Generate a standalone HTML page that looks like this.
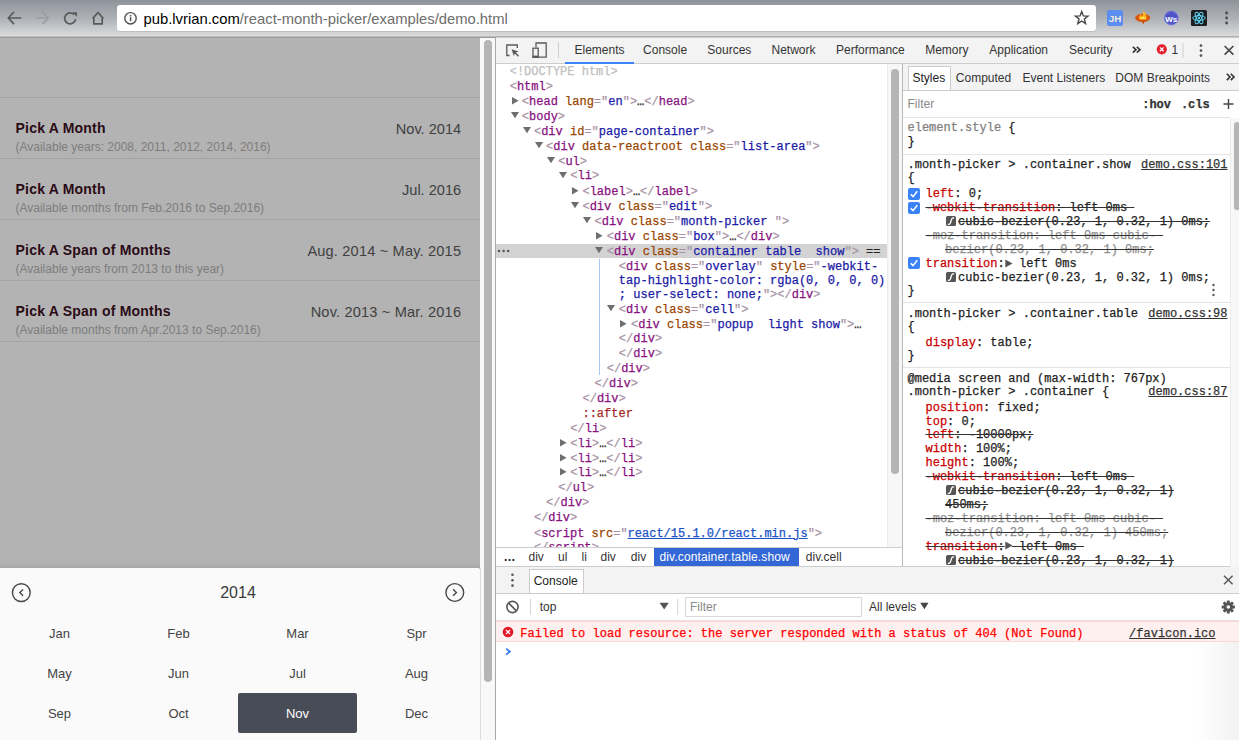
<!DOCTYPE html><html><head><meta charset="utf-8"><style>
html,body{margin:0;padding:0;width:1239px;height:740px;overflow:hidden;background:#fff;position:relative}
div,svg{position:absolute}
.m{-webkit-text-stroke:0.25px}
span div, span svg{position:absolute}
</style></head><body>
<div style="left:0px;top:0px;width:1239px;height:36px;background:linear-gradient(#8e939b,#b1b4b9 55%,#dadbdd);"></div>
<div style="left:0px;top:36px;width:496px;height:1px;background:#bdbdbd;"></div>
<div style="left:0px;top:37px;width:496px;height:1px;background:#9c9c9c;"></div>
<div style="left:496px;top:36px;width:743px;height:1px;background:#b0b0b0;"></div>
<div style="left:496px;top:37px;width:743px;height:1px;background:#cbcbcb;"></div>
<svg style="left:0;top:0" width="115" height="36" viewBox="0 0 115 36">
<g fill="none" stroke="#5a5a5a" stroke-width="1.6" stroke-linecap="square">
<path d="M8.5 18 H20.5 M13.5 12.5 L8.3 18 L13.5 23.5"/>
</g>
<g fill="none" stroke="#9a9da2" stroke-width="1.6" stroke-linecap="square">
<path d="M36.5 18 H48 M43 12.5 L48.2 18 L43 23.5"/>
</g>
<g fill="none" stroke="#5a5a5a" stroke-width="1.7">
<path d="M75.6 19.2 A5.5 5.5 0 1 1 73.9 14.3"/>
</g>
<path d="M72.3 12.2 L77 12.2 L77 16.9 Z" fill="#5a5a5a"/>
<g fill="none" stroke="#5a5a5a" stroke-width="1.7" stroke-linejoin="miter">
<path d="M92.5 18.5 L98 12.6 L103.5 18.5 M93.8 17.2 V23.8 H102.2 V17.2"/>
</g>
</svg>
<div style="left:117px;top:5px;width:979px;height:26px;background:#fff;border-radius:3px;box-shadow:0 1px 0 rgba(0,0,0,.08);"></div>
<svg style="left:120;top:8px;left:120px" width="22" height="22" viewBox="0 0 22 22">
<circle cx="10.5" cy="10.3" r="5.7" fill="none" stroke="#505050" stroke-width="1.4"/>
<rect x="9.8" y="9.2" width="1.5" height="4" fill="#505050"/><rect x="9.8" y="7" width="1.5" height="1.5" fill="#505050"/>
</svg>
<div style="left:143.5px;top:11.57px;font:normal 14.8px/14.8px 'Liberation Sans', sans-serif;color:#000;white-space:pre;"><span style="color:#000">pub.lvrian.com</span><span style="color:#6d6d6d">/react-month-picker/examples/demo.html</span></div>
<svg style="left:1072px;top:9px" width="20" height="20" viewBox="0 0 20 20">
<path d="M9.70 2.60 L11.35 6.93 L15.98 7.16 L12.36 10.07 L13.58 14.54 L9.70 12.00 L5.82 14.54 L7.04 10.07 L3.42 7.16 L8.05 6.93 Z" fill="none" stroke="#454545" stroke-width="1.4" stroke-linejoin="miter"/>
</svg>
<svg style="left:1100px;top:4px" width="139" height="28" viewBox="1100 4 139 28">
<rect x="1107" y="10" width="16" height="16" rx="2" fill="#5b8ef0"/>
<text x="1115" y="22.3" font-family="Liberation Sans" font-weight="bold" font-size="9.8" fill="#f2ecd6" text-anchor="middle">JH</text>
<ellipse cx="1142.7" cy="17.8" rx="7.6" ry="4" fill="#d9560f"/>
<path d="M1141.6 21 L1143.4 24.5 L1144.8 20.8 Z" fill="#c74a0a"/>
<path d="M1139.2 19.2 C1138.6 16 1140.5 15.5 1140.6 14.2 C1142 15.5 1141.8 16.5 1142.8 16.3 C1142.6 14 1143.5 12 1143.2 10.8 C1145.5 12.5 1147 15.5 1146.5 19.2 Z" fill="#ffb020"/>
<path d="M1140 19.3 L1140.6 16.8 L1142.2 18 L1143.2 15.6 L1144.4 18 L1145.8 16.8 L1146 19.3 Z" fill="#ffe14a"/>
<circle cx="1171.3" cy="18" r="7.2" fill="#6064d0" stroke="#8a8de0" stroke-width="0.8" stroke-dasharray="1 0.8"/>
<circle cx="1171.3" cy="18" r="5.8" fill="#4d52c4"/>
<text x="1171.3" y="21.5" font-family="Liberation Sans" font-weight="bold" font-size="8" fill="#fff" text-anchor="middle">Ws</text>
<rect x="1191" y="10" width="16" height="16" rx="1.5" fill="#1d1d1d"/>
<g fill="none" stroke="#5fd4f5" stroke-width="1"><ellipse cx="1199" cy="18" rx="6.3" ry="2.4"/><ellipse cx="1199" cy="18" rx="6.3" ry="2.4" transform="rotate(60 1199 18)"/><ellipse cx="1199" cy="18" rx="6.3" ry="2.4" transform="rotate(-60 1199 18)"/></g>
<circle cx="1199" cy="18" r="1.2" fill="#5fd4f5"/>
<circle cx="1226.6" cy="13" r="1.4" fill="#4a4a4a"/><circle cx="1226.6" cy="18" r="1.4" fill="#4a4a4a"/><circle cx="1226.6" cy="23" r="1.4" fill="#4a4a4a"/>
</svg>
<div style="left:0px;top:38px;width:480px;height:702px;background:#b3b3b3;"></div>
<div style="left:0px;top:97px;width:480px;height:1px;background:#a3a3a3;"></div>
<div style="left:0px;top:158px;width:480px;height:1px;background:#a3a3a3;"></div>
<div style="left:0px;top:219px;width:480px;height:1px;background:#a3a3a3;"></div>
<div style="left:0px;top:280px;width:480px;height:1px;background:#a3a3a3;"></div>
<div style="left:0px;top:341px;width:480px;height:1px;background:#a3a3a3;"></div>
<div style="left:15.5px;top:120.95px;font:bold 14px/14px 'Liberation Sans', sans-serif;color:#2b0b16;white-space:pre;letter-spacing:0.22px;">Pick A Month</div>
<div style="left:15.5px;top:140.54px;font:normal 12px/12px 'Liberation Sans', sans-serif;color:#7d7d7d;white-space:pre;">(Available years: 2008, 2011, 2012, 2014, 2016)</div>
<div style="right:777.8px;text-align:right;top:121.84px;font:normal 14.6px/14.6px 'Liberation Sans', sans-serif;color:#404040;white-space:pre;">Nov. 2014</div>
<div style="left:15.5px;top:181.95px;font:bold 14px/14px 'Liberation Sans', sans-serif;color:#2b0b16;white-space:pre;letter-spacing:0.22px;">Pick A Month</div>
<div style="left:15.5px;top:201.54px;font:normal 12px/12px 'Liberation Sans', sans-serif;color:#7d7d7d;white-space:pre;">(Available months from Feb.2016 to Sep.2016)</div>
<div style="right:777.8px;text-align:right;top:182.84px;font:normal 14.6px/14.6px 'Liberation Sans', sans-serif;color:#404040;white-space:pre;">Jul. 2016</div>
<div style="left:15.5px;top:242.95px;font:bold 14px/14px 'Liberation Sans', sans-serif;color:#2b0b16;white-space:pre;letter-spacing:0.22px;">Pick A Span of Months</div>
<div style="left:15.5px;top:262.54px;font:normal 12px/12px 'Liberation Sans', sans-serif;color:#7d7d7d;white-space:pre;">(Available years from 2013 to this year)</div>
<div style="right:777.8px;text-align:right;top:243.84px;font:normal 14.6px/14.6px 'Liberation Sans', sans-serif;color:#404040;white-space:pre;letter-spacing:0.17px;">Aug. 2014 ~ May. 2015</div>
<div style="left:15.5px;top:303.95px;font:bold 14px/14px 'Liberation Sans', sans-serif;color:#2b0b16;white-space:pre;letter-spacing:0.22px;">Pick A Span of Months</div>
<div style="left:15.5px;top:323.54px;font:normal 12px/12px 'Liberation Sans', sans-serif;color:#7d7d7d;white-space:pre;">(Available months from Apr.2013 to Sep.2016)</div>
<div style="right:777.8px;text-align:right;top:304.84px;font:normal 14.6px/14.6px 'Liberation Sans', sans-serif;color:#404040;white-space:pre;letter-spacing:0.17px;">Nov. 2013 ~ Mar. 2016</div>
<div style="left:0px;top:563px;width:480px;height:5px;background:linear-gradient(rgba(0,0,0,0),rgba(0,0,0,.07));"></div>
<div style="left:0px;top:568px;width:480px;height:172px;background:#fafafa;border-radius:0 2px 0 0;"></div>
<svg style="left:0;top:568px" width="480" height="50" viewBox="0 568 480 50">
<g fill="none" stroke="#474747" stroke-width="1.4">
<circle cx="21.3" cy="592.6" r="8.9"/><path d="M23.1 589.4 L19.8 592.6 L23.1 595.8"/>
<circle cx="454.8" cy="592.5" r="8.9"/><path d="M453.1 589.3 L456.4 592.5 L453.1 595.7"/>
</g></svg>
<div style="left:38px;width:400px;text-align:center;top:585.15px;font:normal 16px/16px 'Liberation Sans', sans-serif;color:#3a3a3a;white-space:pre;">2014</div>
<div style="left:238px;top:693px;width:119px;height:40px;background:#484c57;border-radius:2px;"></div>
<div style="left:-140.5px;width:400px;text-align:center;top:626.59px;font:normal 13px/13px 'Liberation Sans', sans-serif;color:#444;white-space:pre;">Jan</div>
<div style="left:-21.5px;width:400px;text-align:center;top:626.59px;font:normal 13px/13px 'Liberation Sans', sans-serif;color:#444;white-space:pre;">Feb</div>
<div style="left:97.5px;width:400px;text-align:center;top:626.59px;font:normal 13px/13px 'Liberation Sans', sans-serif;color:#444;white-space:pre;">Mar</div>
<div style="left:216.5px;width:400px;text-align:center;top:626.59px;font:normal 13px/13px 'Liberation Sans', sans-serif;color:#444;white-space:pre;">Spr</div>
<div style="left:-140.5px;width:400px;text-align:center;top:666.59px;font:normal 13px/13px 'Liberation Sans', sans-serif;color:#444;white-space:pre;">May</div>
<div style="left:-21.5px;width:400px;text-align:center;top:666.59px;font:normal 13px/13px 'Liberation Sans', sans-serif;color:#444;white-space:pre;">Jun</div>
<div style="left:97.5px;width:400px;text-align:center;top:666.59px;font:normal 13px/13px 'Liberation Sans', sans-serif;color:#444;white-space:pre;">Jul</div>
<div style="left:216.5px;width:400px;text-align:center;top:666.59px;font:normal 13px/13px 'Liberation Sans', sans-serif;color:#444;white-space:pre;">Aug</div>
<div style="left:-140.5px;width:400px;text-align:center;top:706.59px;font:normal 13px/13px 'Liberation Sans', sans-serif;color:#444;white-space:pre;">Sep</div>
<div style="left:-21.5px;width:400px;text-align:center;top:706.59px;font:normal 13px/13px 'Liberation Sans', sans-serif;color:#444;white-space:pre;">Oct</div>
<div style="left:97.5px;width:400px;text-align:center;top:706.59px;font:normal 13px/13px 'Liberation Sans', sans-serif;color:#fff;white-space:pre;">Nov</div>
<div style="left:216.5px;width:400px;text-align:center;top:706.59px;font:normal 13px/13px 'Liberation Sans', sans-serif;color:#444;white-space:pre;">Dec</div>
<div style="left:480px;top:38px;width:15px;height:702px;background:#f8f8f8;"></div>
<div style="left:480px;top:568px;width:1px;height:172px;background:#dcdcdc;"></div>
<div style="left:484px;top:40px;width:8px;height:642px;background:#b5b5b5;border-radius:4px;"></div>
<div style="left:495px;top:38px;width:1px;height:702px;background:#a8a8a8;"></div>
<div style="left:496px;top:38px;width:743px;height:702px;background:#fff;"></div>
<div style="left:496px;top:38px;width:743px;height:25px;background:#f3f3f3;"></div>
<div style="left:496px;top:63px;width:743px;height:1px;background:#cdcdcd;"></div>
<svg style="left:496px;top:37px" width="70" height="26" viewBox="496 37 70 26">
<path d="M509.5 55.5 H506.8 V45 H517.3 V48" fill="none" stroke="#5a5a5a" stroke-width="1.3"/>
<path d="M511.6 49.2 L518.5 51.4 L515.9 52.5 L519 55.7 L518 56.7 L514.9 53.5 L513.8 56.1 Z" fill="#5a5a5a"/>
<path d="M536 47.5 V43 H546.2 V57.2 H538.5" fill="none" stroke="#5a5a5a" stroke-width="1.3"/>
<rect x="533" y="48.2" width="5.2" height="9" fill="none" stroke="#5a5a5a" stroke-width="1.3"/>
<rect x="532.4" y="55.6" width="6.4" height="2.2" fill="#5a5a5a"/>
<rect x="558" y="42" width="1" height="16" fill="#cfcfcf"/>
</svg>
<div style="left:574.5px;top:44.04px;font:normal 12px/12px 'Liberation Sans', sans-serif;color:#333;white-space:pre;">Elements</div>
<div style="left:643.1px;top:44.04px;font:normal 12px/12px 'Liberation Sans', sans-serif;color:#333;white-space:pre;">Console</div>
<div style="left:707.3px;top:44.04px;font:normal 12px/12px 'Liberation Sans', sans-serif;color:#333;white-space:pre;">Sources</div>
<div style="left:771.5px;top:44.04px;font:normal 12px/12px 'Liberation Sans', sans-serif;color:#333;white-space:pre;">Network</div>
<div style="left:836.1px;top:44.04px;font:normal 12px/12px 'Liberation Sans', sans-serif;color:#333;white-space:pre;">Performance</div>
<div style="left:925.2px;top:44.04px;font:normal 12px/12px 'Liberation Sans', sans-serif;color:#333;white-space:pre;">Memory</div>
<div style="left:989.3px;top:44.04px;font:normal 12px/12px 'Liberation Sans', sans-serif;color:#333;white-space:pre;">Application</div>
<div style="left:1069.1px;top:44.04px;font:normal 12px/12px 'Liberation Sans', sans-serif;color:#333;white-space:pre;">Security</div>
<div style="left:565px;top:62px;width:69px;height:2px;background:#3e82f7;"></div>
<svg style="left:1130px;top:44.4px" width="14" height="11.399999999999999" viewBox="1130 44.4 14 11.399999999999999"><path d="M1132.8 47.199999999999996 L1136 50.099999999999994 L1132.8 53.0 M1136.8 47.199999999999996 L1140 50.099999999999994 L1136.8 53.0" fill="none" stroke="#333" stroke-width="1.6"/></svg>
<svg style="left:1150px;top:40px" width="89" height="22" viewBox="1150 40 89 22">
<circle cx="1161.8" cy="49.3" r="5.1" fill="#e21f2a"/>
<path d="M1159.9 47.4 L1163.7 51.2 M1163.7 47.4 L1159.9 51.2" stroke="#fff" stroke-width="1.3"/>
<rect x="1182.5" y="43" width="1" height="15" fill="#cfcfcf"/>
<circle cx="1201" cy="45.6" r="1.35" fill="#555"/><circle cx="1201" cy="50.6" r="1.35" fill="#555"/><circle cx="1201" cy="55.6" r="1.35" fill="#555"/>
<path d="M1224.6 46 L1233.4 54.6 M1233.4 46 L1224.6 54.6" stroke="#444" stroke-width="1.6"/>
</svg>
<div style="left:1171.5px;top:44.04px;font:normal 12px/12px 'Liberation Sans', sans-serif;color:#333;white-space:pre;">1</div>
<div style="left:496px;top:64px;width:391px;height:483px;overflow:hidden;">
<div style="left:0;top:180px;width:391px;height:14px;background:#d3d3d3;"></div>
<svg style="left:0;top:180px" width="16" height="14"><circle cx="3" cy="7.1" r="1.25" fill="#555"/><circle cx="7.6" cy="7.1" r="1.25" fill="#555"/><circle cx="12.1" cy="7.1" r="1.25" fill="#555"/></svg>
<div style="left:103.2px;top:195px;width:1px;height:116px;background:#abc6ee;"></div>
<div class="m" style="left:13.699999999999989px;top:2.11px;font:normal 12px/12px 'Liberation Mono', monospace;color:#333;white-space:pre;"><span style="color:#c0c0c0">&lt;!DOCTYPE html&gt;</span></div>
<div class="m" style="left:13.699999999999989px;top:16.71px;font:normal 12px/12px 'Liberation Mono', monospace;color:#333;white-space:pre;"><span style="color:#a894a6">&lt;</span><span style="color:#881280">html</span><span style="color:#a894a6">&gt;</span></div>
<svg width="8" height="9" style="position:absolute;left:16.20px;top:33.20px"><path d="M0 0 V7.6 L6.6 3.8 Z" fill="#6e6e6e"/></svg>
<div class="m" style="left:25.83000000000004px;top:32.11px;font:normal 12px/12px 'Liberation Mono', monospace;color:#333;white-space:pre;"><span style="color:#a894a6">&lt;</span><span style="color:#881280">head</span><span style="color:#994500"> </span><span style="color:#994500">lang</span><span style="color:#a894a6">=&quot;</span><span style="color:#1a1aa6">en</span><span style="color:#a894a6">&quot;</span><span style="color:#a894a6">&gt;</span><span style="color:#222">…</span><span style="color:#a894a6">&lt;/</span><span style="color:#881280">head</span><span style="color:#a894a6">&gt;</span></div>
<svg width="9" height="8" style="position:absolute;left:15.40px;top:48.00px"><path d="M0 0 H8 L4 6.3 Z" fill="#6e6e6e"/></svg>
<div class="m" style="left:25.83000000000004px;top:46.71px;font:normal 12px/12px 'Liberation Mono', monospace;color:#333;white-space:pre;"><span style="color:#a894a6">&lt;</span><span style="color:#881280">body</span><span style="color:#a894a6">&gt;</span></div>
<svg width="9" height="8" style="position:absolute;left:27.40px;top:62.80px"><path d="M0 0 H8 L4 6.3 Z" fill="#6e6e6e"/></svg>
<div class="m" style="left:37.960000000000036px;top:61.51px;font:normal 12px/12px 'Liberation Mono', monospace;color:#333;white-space:pre;"><span style="color:#a894a6">&lt;</span><span style="color:#881280">div</span><span style="color:#994500"> </span><span style="color:#994500">id</span><span style="color:#a894a6">=&quot;</span><span style="color:#1a1aa6">page-container</span><span style="color:#a894a6">&quot;</span><span style="color:#a894a6">&gt;</span></div>
<svg width="9" height="8" style="position:absolute;left:39.40px;top:78.00px"><path d="M0 0 H8 L4 6.3 Z" fill="#6e6e6e"/></svg>
<div class="m" style="left:50.09000000000003px;top:76.71px;font:normal 12px/12px 'Liberation Mono', monospace;color:#333;white-space:pre;"><span style="color:#a894a6">&lt;</span><span style="color:#881280">div</span><span style="color:#994500"> </span><span style="color:#994500">data-reactroot</span><span style="color:#994500"> </span><span style="color:#994500">class</span><span style="color:#a894a6">=&quot;</span><span style="color:#1a1aa6">list-area</span><span style="color:#a894a6">&quot;</span><span style="color:#a894a6">&gt;</span></div>
<svg width="9" height="8" style="position:absolute;left:51.40px;top:92.80px"><path d="M0 0 H8 L4 6.3 Z" fill="#6e6e6e"/></svg>
<div class="m" style="left:62.22000000000003px;top:91.51px;font:normal 12px/12px 'Liberation Mono', monospace;color:#333;white-space:pre;"><span style="color:#a894a6">&lt;</span><span style="color:#881280">ul</span><span style="color:#a894a6">&gt;</span></div>
<svg width="9" height="8" style="position:absolute;left:63.40px;top:107.60px"><path d="M0 0 H8 L4 6.3 Z" fill="#6e6e6e"/></svg>
<div class="m" style="left:74.35000000000002px;top:106.31px;font:normal 12px/12px 'Liberation Mono', monospace;color:#333;white-space:pre;"><span style="color:#a894a6">&lt;</span><span style="color:#881280">li</span><span style="color:#a894a6">&gt;</span></div>
<svg width="8" height="9" style="position:absolute;left:76.20px;top:122.80px"><path d="M0 0 V7.6 L6.6 3.8 Z" fill="#6e6e6e"/></svg>
<div class="m" style="left:86.48000000000002px;top:121.71px;font:normal 12px/12px 'Liberation Mono', monospace;color:#333;white-space:pre;"><span style="color:#a894a6">&lt;</span><span style="color:#881280">label</span><span style="color:#a894a6">&gt;</span><span style="color:#222">…</span><span style="color:#a894a6">&lt;/</span><span style="color:#881280">label</span><span style="color:#a894a6">&gt;</span></div>
<svg width="9" height="8" style="position:absolute;left:75.40px;top:138.10px"><path d="M0 0 H8 L4 6.3 Z" fill="#6e6e6e"/></svg>
<div class="m" style="left:86.48000000000002px;top:136.81px;font:normal 12px/12px 'Liberation Mono', monospace;color:#333;white-space:pre;"><span style="color:#a894a6">&lt;</span><span style="color:#881280">div</span><span style="color:#994500"> </span><span style="color:#994500">class</span><span style="color:#a894a6">=&quot;</span><span style="color:#1a1aa6">edit</span><span style="color:#a894a6">&quot;</span><span style="color:#a894a6">&gt;</span></div>
<svg width="9" height="8" style="position:absolute;left:87.40px;top:152.80px"><path d="M0 0 H8 L4 6.3 Z" fill="#6e6e6e"/></svg>
<div class="m" style="left:98.61000000000001px;top:151.51px;font:normal 12px/12px 'Liberation Mono', monospace;color:#333;white-space:pre;"><span style="color:#a894a6">&lt;</span><span style="color:#881280">div</span><span style="color:#994500"> </span><span style="color:#994500">class</span><span style="color:#a894a6">=&quot;</span><span style="color:#1a1aa6">month-picker</span><span style="color:#1a1aa6"> </span><span style="color:#a894a6">&quot;</span><span style="color:#a894a6">&gt;</span></div>
<svg width="8" height="9" style="position:absolute;left:100.20px;top:167.70px"><path d="M0 0 V7.6 L6.6 3.8 Z" fill="#6e6e6e"/></svg>
<div class="m" style="left:110.74000000000001px;top:166.61px;font:normal 12px/12px 'Liberation Mono', monospace;color:#333;white-space:pre;"><span style="color:#a894a6">&lt;</span><span style="color:#881280">div</span><span style="color:#994500"> </span><span style="color:#994500">class</span><span style="color:#a894a6">=&quot;</span><span style="color:#1a1aa6">box</span><span style="color:#a894a6">&quot;</span><span style="color:#a894a6">&gt;</span><span style="color:#222">…</span><span style="color:#a894a6">&lt;/</span><span style="color:#881280">div</span><span style="color:#a894a6">&gt;</span></div>
<svg width="9" height="8" style="position:absolute;left:99.40px;top:183.00px"><path d="M0 0 H8 L4 6.3 Z" fill="#6e6e6e"/></svg>
<div class="m" style="left:110.74000000000001px;top:181.71px;font:normal 12px/12px 'Liberation Mono', monospace;color:#333;white-space:pre;"><span style="color:#a894a6">&lt;</span><span style="color:#881280">div</span><span style="color:#994500"> </span><span style="color:#994500">class</span><span style="color:#a894a6">=&quot;</span><span style="color:#1a1aa6">container</span><span style="color:#1a1aa6"> </span><span style="color:#1a1aa6">table</span><span style="color:#1a1aa6">  </span><span style="color:#1a1aa6">show</span><span style="color:#a894a6">&quot;</span><span style="color:#a894a6">&gt;</span><span style="color:#222"> == </span></div>
<div class="m" style="left:122.87px;top:196.91px;font:normal 12px/12px 'Liberation Mono', monospace;color:#333;white-space:pre;"><span style="color:#a894a6">&lt;</span><span style="color:#881280">div</span><span style="color:#994500"> </span><span style="color:#994500">class</span><span style="color:#a894a6">=&quot;</span><span style="color:#1a1aa6">overlay</span><span style="color:#a894a6">&quot;</span><span style="color:#994500"> </span><span style="color:#994500">style</span><span style="color:#a894a6">=&quot;</span><span style="color:#1a1aa6">-webkit-</span></div>
<div class="m" style="left:122.87px;top:210.81px;font:normal 12px/12px 'Liberation Mono', monospace;color:#333;white-space:pre;"><span style="color:#1a1aa6">tap-highlight-color: rgba(0, 0, 0, 0)</span></div>
<div class="m" style="left:122.87px;top:224.71px;font:normal 12px/12px 'Liberation Mono', monospace;color:#333;white-space:pre;"><span style="color:#1a1aa6">; user-select: none;</span><span style="color:#a894a6">&quot;</span><span style="color:#a894a6">&gt;</span><span style="color:#a894a6">&lt;/</span><span style="color:#881280">div</span><span style="color:#a894a6">&gt;</span></div>
<svg width="9" height="8" style="position:absolute;left:111.40px;top:241.40px"><path d="M0 0 H8 L4 6.3 Z" fill="#6e6e6e"/></svg>
<div class="m" style="left:122.87px;top:240.11px;font:normal 12px/12px 'Liberation Mono', monospace;color:#333;white-space:pre;"><span style="color:#a894a6">&lt;</span><span style="color:#881280">div</span><span style="color:#994500"> </span><span style="color:#994500">class</span><span style="color:#a894a6">=&quot;</span><span style="color:#1a1aa6">cell</span><span style="color:#a894a6">&quot;</span><span style="color:#a894a6">&gt;</span></div>
<svg width="8" height="9" style="position:absolute;left:124.20px;top:255.90px"><path d="M0 0 V7.6 L6.6 3.8 Z" fill="#6e6e6e"/></svg>
<div class="m" style="left:135.0px;top:254.81px;font:normal 12px/12px 'Liberation Mono', monospace;color:#333;white-space:pre;"><span style="color:#a894a6">&lt;</span><span style="color:#881280">div</span><span style="color:#994500"> </span><span style="color:#994500">class</span><span style="color:#a894a6">=&quot;</span><span style="color:#1a1aa6">popup</span><span style="color:#1a1aa6">  </span><span style="color:#1a1aa6">light</span><span style="color:#1a1aa6"> </span><span style="color:#1a1aa6">show</span><span style="color:#a894a6">&quot;</span><span style="color:#a894a6">&gt;</span><span style="color:#222">…</span></div>
<div class="m" style="left:122.87px;top:269.01px;font:normal 12px/12px 'Liberation Mono', monospace;color:#333;white-space:pre;"><span style="color:#a894a6">&lt;/</span><span style="color:#881280">div</span><span style="color:#a894a6">&gt;</span></div>
<div class="m" style="left:122.87px;top:284.01px;font:normal 12px/12px 'Liberation Mono', monospace;color:#333;white-space:pre;"><span style="color:#a894a6">&lt;/</span><span style="color:#881280">div</span><span style="color:#a894a6">&gt;</span></div>
<div class="m" style="left:110.74000000000001px;top:298.71px;font:normal 12px/12px 'Liberation Mono', monospace;color:#333;white-space:pre;"><span style="color:#a894a6">&lt;/</span><span style="color:#881280">div</span><span style="color:#a894a6">&gt;</span></div>
<div class="m" style="left:98.61000000000001px;top:313.91px;font:normal 12px/12px 'Liberation Mono', monospace;color:#333;white-space:pre;"><span style="color:#a894a6">&lt;/</span><span style="color:#881280">div</span><span style="color:#a894a6">&gt;</span></div>
<div class="m" style="left:86.48000000000002px;top:328.61px;font:normal 12px/12px 'Liberation Mono', monospace;color:#333;white-space:pre;"><span style="color:#a894a6">&lt;/</span><span style="color:#881280">div</span><span style="color:#a894a6">&gt;</span></div>
<div class="m" style="left:86.48000000000002px;top:343.91px;font:normal 12px/12px 'Liberation Mono', monospace;color:#333;white-space:pre;"><span style="color:#a52a2a">::after</span></div>
<div class="m" style="left:74.35000000000002px;top:358.91px;font:normal 12px/12px 'Liberation Mono', monospace;color:#333;white-space:pre;"><span style="color:#a894a6">&lt;/</span><span style="color:#881280">li</span><span style="color:#a894a6">&gt;</span></div>
<svg width="8" height="9" style="position:absolute;left:64.20px;top:374.90px"><path d="M0 0 V7.6 L6.6 3.8 Z" fill="#6e6e6e"/></svg>
<div class="m" style="left:74.35000000000002px;top:373.81px;font:normal 12px/12px 'Liberation Mono', monospace;color:#333;white-space:pre;"><span style="color:#a894a6">&lt;</span><span style="color:#881280">li</span><span style="color:#a894a6">&gt;</span><span style="color:#222">…</span><span style="color:#a894a6">&lt;/</span><span style="color:#881280">li</span><span style="color:#a894a6">&gt;</span></div>
<svg width="8" height="9" style="position:absolute;left:64.20px;top:389.60px"><path d="M0 0 V7.6 L6.6 3.8 Z" fill="#6e6e6e"/></svg>
<div class="m" style="left:74.35000000000002px;top:388.51px;font:normal 12px/12px 'Liberation Mono', monospace;color:#333;white-space:pre;"><span style="color:#a894a6">&lt;</span><span style="color:#881280">li</span><span style="color:#a894a6">&gt;</span><span style="color:#222">…</span><span style="color:#a894a6">&lt;/</span><span style="color:#881280">li</span><span style="color:#a894a6">&gt;</span></div>
<svg width="8" height="9" style="position:absolute;left:64.20px;top:403.90px"><path d="M0 0 V7.6 L6.6 3.8 Z" fill="#6e6e6e"/></svg>
<div class="m" style="left:74.35000000000002px;top:402.81px;font:normal 12px/12px 'Liberation Mono', monospace;color:#333;white-space:pre;"><span style="color:#a894a6">&lt;</span><span style="color:#881280">li</span><span style="color:#a894a6">&gt;</span><span style="color:#222">…</span><span style="color:#a894a6">&lt;/</span><span style="color:#881280">li</span><span style="color:#a894a6">&gt;</span></div>
<div class="m" style="left:62.22000000000003px;top:418.01px;font:normal 12px/12px 'Liberation Mono', monospace;color:#333;white-space:pre;"><span style="color:#a894a6">&lt;/</span><span style="color:#881280">ul</span><span style="color:#a894a6">&gt;</span></div>
<div class="m" style="left:50.09000000000003px;top:433.21px;font:normal 12px/12px 'Liberation Mono', monospace;color:#333;white-space:pre;"><span style="color:#a894a6">&lt;/</span><span style="color:#881280">div</span><span style="color:#a894a6">&gt;</span></div>
<div class="m" style="left:37.960000000000036px;top:447.61px;font:normal 12px/12px 'Liberation Mono', monospace;color:#333;white-space:pre;"><span style="color:#a894a6">&lt;/</span><span style="color:#881280">div</span><span style="color:#a894a6">&gt;</span></div>
<div class="m" style="left:37.960000000000036px;top:463.71px;font:normal 12px/12px 'Liberation Mono', monospace;color:#333;white-space:pre;"><span style="color:#a894a6">&lt;</span><span style="color:#881280">script</span><span style="color:#994500"> </span><span style="color:#994500">src</span><span style="color:#a894a6">=&quot;</span><span style="color:#2053c8;text-decoration:underline">react/15.1.0/react.min.js</span><span style="color:#a894a6">&quot;</span><span style="color:#a894a6">&gt;</span></div>
<div class="m" style="left:37.960000000000036px;top:478.31px;font:normal 12px/12px 'Liberation Mono', monospace;color:#333;white-space:pre;"><span style="color:#a894a6">&lt;/</span><span style="color:#881280">script</span><span style="color:#a894a6">&gt;</span></div>
</div>
<div style="left:887px;top:64px;width:15px;height:483px;background:#f7f7f7;border-left:1px solid #ececec;box-sizing:border-box;"></div>
<div style="left:891px;top:69px;width:7.6px;height:404.5px;background:#b5b5b5;border-radius:4px;"></div>
<div style="left:902px;top:64px;width:1px;height:503px;background:#b8b8b8;"></div>
<div style="left:496px;top:547px;width:406px;height:1px;background:#cdcdcd;"></div>
<div style="left:496px;top:548px;width:406px;height:18px;background:#fff;"></div>
<div style="left:503.6px;top:551.14px;font:bold 12px/12px 'Liberation Sans', sans-serif;color:#222;white-space:pre;">…</div>
<div style="left:528.5px;top:551.14px;font:normal 12px/12px 'Liberation Sans', sans-serif;color:#333;white-space:pre;">div</div>
<div style="left:558px;top:551.14px;font:normal 12px/12px 'Liberation Sans', sans-serif;color:#333;white-space:pre;">ul</div>
<div style="left:581.5px;top:551.14px;font:normal 12px/12px 'Liberation Sans', sans-serif;color:#333;white-space:pre;">li</div>
<div style="left:600.5px;top:551.14px;font:normal 12px/12px 'Liberation Sans', sans-serif;color:#333;white-space:pre;">div</div>
<div style="left:630.8px;top:551.14px;font:normal 12px/12px 'Liberation Sans', sans-serif;color:#333;white-space:pre;">div</div>
<div style="left:654px;top:548px;width:145px;height:18px;background:#3367d6;"></div>
<div style="left:659.5px;top:551.14px;font:normal 12px/12px 'Liberation Sans', sans-serif;color:#fff;white-space:pre;letter-spacing:0.13px;">div.container.table.show</div>
<div style="left:805.8px;top:551.14px;font:normal 12px/12px 'Liberation Sans', sans-serif;color:#333;white-space:pre;">div.cell</div>
<div style="left:496px;top:566px;width:743px;height:1px;background:#cdcdcd;"></div>
<div style="left:903px;top:64px;width:336px;height:26px;background:#f3f3f3;"></div>
<div style="left:903px;top:90px;width:336px;height:1px;background:#cdcdcd;"></div>
<div style="left:908px;top:66px;width:43px;height:25px;background:#fff;border:1px solid #cdcdcd;border-bottom:none;box-sizing:border-box;"></div>
<div style="left:903px;top:90px;width:336px;height:1px;background:#cdcdcd;"></div>
<div style="left:912.5px;top:71.84px;font:normal 12px/12px 'Liberation Sans', sans-serif;color:#222;white-space:pre;">Styles</div>
<div style="left:955.8px;top:71.84px;font:normal 12px/12px 'Liberation Sans', sans-serif;color:#333;white-space:pre;">Computed</div>
<div style="left:1022.5px;top:71.84px;font:normal 12px/12px 'Liberation Sans', sans-serif;color:#333;white-space:pre;">Event Listeners</div>
<div style="left:1115.3px;top:71.84px;font:normal 12px/12px 'Liberation Sans', sans-serif;color:#333;white-space:pre;">DOM Breakpoints</div>
<svg style="left:1224px;top:71.1px" width="14" height="11.900000000000006" viewBox="1224 71.1 14 11.900000000000006"><path d="M1226.8 73.89999999999999 L1230 77.05 L1226.8 80.2 M1230.8 73.89999999999999 L1234 77.05 L1230.8 80.2" fill="none" stroke="#333" stroke-width="1.6"/></svg>
<div style="left:907.5px;top:97.84px;font:normal 12px/12px 'Liberation Sans', sans-serif;color:#8a8a8a;white-space:pre;">Filter</div>
<div class="m" style="left:1142.2px;top:98.81px;font:bold 12px/12px 'Liberation Mono', monospace;color:#333;white-space:pre;">:hov</div>
<div class="m" style="left:1180.9px;top:98.81px;font:bold 12px/12px 'Liberation Mono', monospace;color:#333;white-space:pre;">.cls</div>
<svg style="left:1220px;top:96px" width="19" height="16" viewBox="1220 96 19 16"><path d="M1228.5 99 V109 M1223.5 104 H1233.5" stroke="#444" stroke-width="1.4"/></svg>
<div style="left:903px;top:117px;width:327px;height:1px;background:#e4e4e4;"></div>
<div style="left:1230px;top:118px;width:9px;height:449px;background:#f7f7f7;border-left:1px solid #ececec;box-sizing:border-box;"></div>
<div style="left:1234px;top:121.6px;width:6px;height:88.6px;background:#b5b5b5;border-radius:3px;"></div>
<div class="m" style="left:907.5px;top:121.61px;font:normal 12px/12px 'Liberation Mono', monospace;color:#333;white-space:pre;"><span style="color:#808080">element.style </span><span style="color:#222">{</span></div>
<div class="m" style="left:907.5px;top:136.31px;font:normal 12px/12px 'Liberation Mono', monospace;color:#222;white-space:pre;">}</div>
<div style="left:903px;top:154px;width:327px;height:1px;background:#e4e4e4;"></div>
<div class="m" style="left:907.5px;top:158.61px;font:normal 12px/12px 'Liberation Mono', monospace;color:#222;white-space:pre;">.month-picker &gt; .container.show</div>
<div class="m" style="right:11.5px;text-align:right;top:158.61px;font:normal 12px/12px 'Liberation Mono', monospace;color:#333;white-space:pre;text-decoration:underline;">demo.css:101</div>
<div class="m" style="left:907.5px;top:172.31px;font:normal 12px/12px 'Liberation Mono', monospace;color:#222;white-space:pre;">{</div>
<div style="left:908px;top:187.7px;width:12px;height:12px"><svg width="12" height="12" viewBox="0 0 12 12"><rect x="0" y="0" width="12" height="12" rx="2" fill="#3a82f7"/><path d="M2.8 6.2 L5 8.6 L9.3 3.3" stroke="#fff" stroke-width="1.5" fill="none"/></svg></div>
<div class="m" style="left:925.5px;top:188.11px;font:normal 12px/12px 'Liberation Mono', monospace;color:#333;white-space:pre;"><span style="color:#c80000">left</span><span style="color:#222">: 0;</span></div>
<div style="left:908px;top:201.5px;width:12px;height:12px"><svg width="12" height="12" viewBox="0 0 12 12"><rect x="0" y="0" width="12" height="12" rx="2" fill="#3a82f7"/><path d="M2.8 6.2 L5 8.6 L9.3 3.3" stroke="#fff" stroke-width="1.5" fill="none"/></svg></div>
<div class="m" style="left:925.5px;top:201.91px;font:normal 12px/12px 'Liberation Mono', monospace;color:#333;white-space:pre;"><span style="text-decoration:line-through"><span style="color:#c80000">-webkit-transition</span><span style="color:#222">: left 0ms </span></span></div>
<div class="m" style="left:946px;top:216.11px;font:normal 12px/12px 'Liberation Mono', monospace;color:#333;white-space:pre;"><span style="text-decoration:line-through"><span style="display:inline-block;width:10px;height:10px;background:#555;border-radius:1.5px;vertical-align:-1px;margin-right:2px;position:relative"><svg width="10" height="10" style="position:absolute;left:0;top:0"><path d="M1.8 8.3 H3 C5.5 8.3 4.5 1.8 7 1.8 H8.2" stroke="#fff" stroke-width="1.3" fill="none"/></svg></span><span style="color:#222">cubic-bezier(0.23, 1, 0.32, 1) 0ms;</span></span></div>
<div class="m" style="left:925.5px;top:229.71px;font:normal 12px/12px 'Liberation Mono', monospace;color:#333;white-space:pre;"><span style="text-decoration:line-through"><span style="color:#909090">-moz-transition: left 0ms cubic- </span></span></div>
<div class="m" style="left:945px;top:243.51px;font:normal 12px/12px 'Liberation Mono', monospace;color:#333;white-space:pre;"><span style="text-decoration:line-through"><span style="color:#909090">bezier(0.23, 1, 0.32, 1) 0ms;</span></span></div>
<div style="left:908px;top:257.0px;width:12px;height:12px"><svg width="12" height="12" viewBox="0 0 12 12"><rect x="0" y="0" width="12" height="12" rx="2" fill="#3a82f7"/><path d="M2.8 6.2 L5 8.6 L9.3 3.3" stroke="#fff" stroke-width="1.5" fill="none"/></svg></div>
<div class="m" style="left:925.5px;top:258.41px;font:normal 12px/12px 'Liberation Mono', monospace;color:#333;white-space:pre;"><span style="color:#c80000">transition</span><span style="color:#222">:</span><span style="display:inline-block;width:7.2px;position:relative;height:9px;vertical-align:-0.5px"><svg width="8" height="9" style="position:absolute;left:0;top:0"><path d="M0.3 0.5 V8.5 L7.5 4.5 Z" fill="#555"/></svg></span><span style="color:#222"> left 0ms</span></div>
<div class="m" style="left:946px;top:271.81px;font:normal 12px/12px 'Liberation Mono', monospace;color:#333;white-space:pre;"><span style="display:inline-block;width:10px;height:10px;background:#555;border-radius:1.5px;vertical-align:-1px;margin-right:2px;position:relative"><svg width="10" height="10" style="position:absolute;left:0;top:0"><path d="M1.8 8.3 H3 C5.5 8.3 4.5 1.8 7 1.8 H8.2" stroke="#fff" stroke-width="1.3" fill="none"/></svg></span><span style="color:#222">cubic-bezier(0.23, 1, 0.32, 1) 0ms;</span></div>
<div style="left:1209px;top:276px;width:10px;height:16px;background:linear-gradient(90deg,rgba(255,255,255,0.2),#fff 60%)"></div>
<svg style="left:1210px;top:282px" width="8" height="16" viewBox="1210 282 8 16"><circle cx="1213.5" cy="285" r="1.2" fill="#555"/><circle cx="1213.5" cy="290" r="1.2" fill="#555"/><circle cx="1213.5" cy="295" r="1.2" fill="#555"/></svg>
<div class="m" style="left:907.5px;top:284.81px;font:normal 12px/12px 'Liberation Mono', monospace;color:#222;white-space:pre;">}</div>
<div style="left:903px;top:302px;width:327px;height:1px;background:#e4e4e4;"></div>
<div class="m" style="left:907.5px;top:307.51px;font:normal 12px/12px 'Liberation Mono', monospace;color:#222;white-space:pre;">.month-picker &gt; .container.table</div>
<div class="m" style="right:11.5px;text-align:right;top:307.51px;font:normal 12px/12px 'Liberation Mono', monospace;color:#333;white-space:pre;text-decoration:underline;">demo.css:98</div>
<div class="m" style="left:907.5px;top:321.31px;font:normal 12px/12px 'Liberation Mono', monospace;color:#222;white-space:pre;">{</div>
<div class="m" style="left:925.5px;top:337.31px;font:normal 12px/12px 'Liberation Mono', monospace;color:#333;white-space:pre;"><span style="color:#c80000">display</span><span style="color:#222">: table;</span></div>
<div class="m" style="left:907.5px;top:350.31px;font:normal 12px/12px 'Liberation Mono', monospace;color:#222;white-space:pre;">}</div>
<div style="left:903px;top:367px;width:327px;height:1px;background:#e4e4e4;"></div>
<div class="m" style="left:907.5px;top:372.51px;font:normal 12px/12px 'Liberation Mono', monospace;color:#222;white-space:pre;">@media screen and (max-width: 767px)</div>
<div class="m" style="left:907.5px;top:385.61px;font:normal 12px/12px 'Liberation Mono', monospace;color:#222;white-space:pre;">.month-picker &gt; .container {</div>
<div class="m" style="right:11.5px;text-align:right;top:385.61px;font:normal 12px/12px 'Liberation Mono', monospace;color:#333;white-space:pre;text-decoration:underline;">demo.css:87</div>
<div class="m" style="left:925.5px;top:402.31px;font:normal 12px/12px 'Liberation Mono', monospace;color:#333;white-space:pre;"><span style="color:#c80000">position</span><span style="color:#222">: fixed;</span></div>
<div class="m" style="left:925.5px;top:416.41px;font:normal 12px/12px 'Liberation Mono', monospace;color:#333;white-space:pre;"><span style="color:#c80000">top</span><span style="color:#222">: 0;</span></div>
<div class="m" style="left:925.5px;top:429.01px;font:normal 12px/12px 'Liberation Mono', monospace;color:#333;white-space:pre;"><span style="text-decoration:line-through"><span style="color:#c80000">left</span><span style="color:#222">: -10000px;</span></span></div>
<div class="m" style="left:925.5px;top:443.21px;font:normal 12px/12px 'Liberation Mono', monospace;color:#333;white-space:pre;"><span style="color:#c80000">width</span><span style="color:#222">: 100%;</span></div>
<div class="m" style="left:925.5px;top:457.41px;font:normal 12px/12px 'Liberation Mono', monospace;color:#333;white-space:pre;"><span style="color:#c80000">height</span><span style="color:#222">: 100%;</span></div>
<div class="m" style="left:925.5px;top:471.01px;font:normal 12px/12px 'Liberation Mono', monospace;color:#333;white-space:pre;"><span style="text-decoration:line-through"><span style="color:#c80000">-webkit-transition</span><span style="color:#222">: left 0ms </span></span></div>
<div class="m" style="left:946px;top:485.41px;font:normal 12px/12px 'Liberation Mono', monospace;color:#333;white-space:pre;"><span style="text-decoration:line-through"><span style="display:inline-block;width:10px;height:10px;background:#555;border-radius:1.5px;vertical-align:-1px;margin-right:2px;position:relative"><svg width="10" height="10" style="position:absolute;left:0;top:0"><path d="M1.8 8.3 H3 C5.5 8.3 4.5 1.8 7 1.8 H8.2" stroke="#fff" stroke-width="1.3" fill="none"/></svg></span><span style="color:#222">cubic-bezier(0.23, 1, 0.32, 1)</span></span></div>
<div class="m" style="left:945px;top:499.41px;font:normal 12px/12px 'Liberation Mono', monospace;color:#333;white-space:pre;"><span style="text-decoration:line-through"><span style="color:#222">450ms;</span></span></div>
<div class="m" style="left:925.5px;top:513.21px;font:normal 12px/12px 'Liberation Mono', monospace;color:#333;white-space:pre;"><span style="text-decoration:line-through"><span style="color:#909090">-moz-transition: left 0ms cubic- </span></span></div>
<div class="m" style="left:945px;top:527.41px;font:normal 12px/12px 'Liberation Mono', monospace;color:#333;white-space:pre;"><span style="text-decoration:line-through"><span style="color:#909090">bezier(0.23, 1, 0.32, 1) 450ms;</span></span></div>
<div class="m" style="left:925.5px;top:540.51px;font:normal 12px/12px 'Liberation Mono', monospace;color:#333;white-space:pre;"><span style="text-decoration:line-through"><span style="color:#c80000">transition</span><span style="color:#222">:</span><span style="display:inline-block;width:7.2px;position:relative;height:9px;vertical-align:-0.5px"><svg width="8" height="9" style="position:absolute;left:0;top:0"><path d="M0.3 0.5 V8.5 L7.5 4.5 Z" fill="#555"/></svg></span><span style="color:#222"> left 0ms </span></span></div>
<div class="m" style="left:946px;top:554.71px;font:normal 12px/12px 'Liberation Mono', monospace;color:#333;white-space:pre;"><span style="text-decoration:line-through"><span style="display:inline-block;width:10px;height:10px;background:#555;border-radius:1.5px;vertical-align:-1px;margin-right:2px;position:relative"><svg width="10" height="10" style="position:absolute;left:0;top:0"><path d="M1.8 8.3 H3 C5.5 8.3 4.5 1.8 7 1.8 H8.2" stroke="#fff" stroke-width="1.3" fill="none"/></svg></span><span style="color:#222">cubic-bezier(0.23, 1, 0.32, 1)</span></span></div>
<div style="left:496px;top:567px;width:743px;height:173px;background:#fff;"></div>
<div style="left:496px;top:567px;width:743px;height:26px;background:#f3f3f3;"></div>
<div style="left:496px;top:593px;width:743px;height:1px;background:#cdcdcd;"></div>
<svg style="left:500px;top:570px" width="25" height="22" viewBox="500 570 25 22"><circle cx="512.5" cy="574.8" r="1.3" fill="#555"/><circle cx="512.5" cy="580.2" r="1.3" fill="#555"/><circle cx="512.5" cy="585.6" r="1.3" fill="#555"/></svg>
<div style="left:529px;top:569px;width:55px;height:25px;background:#fff;border:1px solid #cdcdcd;border-bottom:none;box-sizing:border-box;"></div>
<div style="left:496px;top:593px;width:743px;height:1px;background:#cdcdcd;"></div>
<div style="left:533.7px;top:574.64px;font:normal 12px/12px 'Liberation Sans', sans-serif;color:#222;white-space:pre;">Console</div>
<svg style="left:1220px;top:572px" width="18" height="16" viewBox="1220 572 18 16"><path d="M1224 575.8 L1232.6 584.2 M1232.6 575.8 L1224 584.2" stroke="#555" stroke-width="1.4"/></svg>
<svg style="left:500px;top:596px" width="40" height="22" viewBox="500 596 40 22"><circle cx="512.5" cy="607" r="5.6" fill="none" stroke="#555" stroke-width="1.6"/><path d="M508.6 603.1 L516.4 610.9" stroke="#555" stroke-width="1.6"/><rect x="530" y="599" width="1" height="16" fill="#d5d5d5"/></svg>
<div style="left:539.7px;top:600.54px;font:normal 12px/12px 'Liberation Sans', sans-serif;color:#333;white-space:pre;">top</div>
<svg style="left:655px;top:598px" width="30" height="18" viewBox="655 598 30 18"><path d="M659.6 602.8 H668.8 L664.2 609.6 Z" fill="#555"/><rect x="677.2" y="599" width="1" height="16" fill="#d5d5d5"/></svg>
<div style="left:685px;top:597px;width:177px;height:20px;background:#fff;border:1px solid #d8d8d8;box-sizing:border-box;"></div>
<div style="left:690px;top:600.54px;font:normal 12px/12px 'Liberation Sans', sans-serif;color:#8a8a8a;white-space:pre;">Filter</div>
<div style="left:869px;top:600.54px;font:normal 12px/12px 'Liberation Sans', sans-serif;color:#333;white-space:pre;">All levels</div>
<svg style="left:918px;top:600px" width="14" height="14" viewBox="918 600 14 14"><path d="M920.3 602.8 H928.5 L924.4 609.2 Z" fill="#444"/></svg>
<svg style="left:1219px;top:598px" width="20" height="18" viewBox="1219 598 20 18"><g fill="#555"><circle cx="1228.3" cy="607" r="4.6"/>
<rect x="1226.8" y="600.4" width="3" height="13.2" rx="0.6"/><rect x="1226.8" y="600.4" width="3" height="13.2" rx="0.6" transform="rotate(45 1228.3 607)"/><rect x="1226.8" y="600.4" width="3" height="13.2" rx="0.6" transform="rotate(90 1228.3 607)"/><rect x="1226.8" y="600.4" width="3" height="13.2" rx="0.6" transform="rotate(135 1228.3 607)"/></g>
<circle cx="1228.3" cy="607" r="1.8" fill="#fff"/></svg>
<div style="left:496px;top:620px;width:743px;height:1px;background:#e0e0e0;"></div>
<div style="left:496px;top:621px;width:743px;height:21px;background:#fff0f0;border-top:1px solid #ffd6d6;border-bottom:1px solid #ffd6d6;box-sizing:border-box;"></div>
<svg style="left:500px;top:625px" width="16" height="14" viewBox="500 625 16 14"><circle cx="508" cy="632" r="5.3" fill="#e2162a"/><path d="M505.9 629.9 L510.1 634.1 M510.1 629.9 L505.9 634.1" stroke="#fff" stroke-width="1.3"/></svg>
<div class="m" style="left:520.3px;top:627.91px;font:normal 12px/12px 'Liberation Mono', monospace;color:#f00;white-space:pre;letter-spacing:0.02px;">Failed to load resource: the server responded with a status of 404 (Not Found)</div>
<div class="m" style="right:23.5px;text-align:right;top:627.91px;font:normal 12px/12px 'Liberation Mono', monospace;color:#333;white-space:pre;text-decoration:underline;">/favicon.ico</div>
<div style="left:1195px;top:642px;width:44px;height:98px;background:linear-gradient(90deg,rgba(0,0,0,0),rgba(0,0,0,0.05));"></div>
<svg style="left:500px;top:644px" width="16" height="14" viewBox="500 644 16 14"><path d="M506.2 648.6 L509.8 651.6 L506.2 654.6" stroke="#2f74f0" stroke-width="1.7" fill="none"/></svg>
</body></html>
